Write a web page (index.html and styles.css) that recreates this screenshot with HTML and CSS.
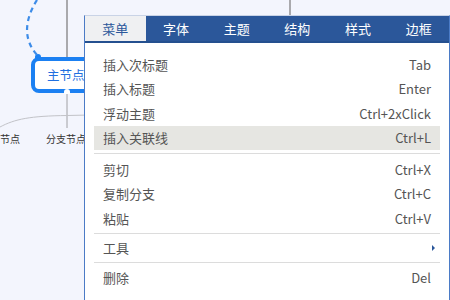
FILE: index.html
```html
<!DOCTYPE html>
<html lang="zh">
<head>
<meta charset="utf-8">
<link rel="stylesheet" href="styles.css">
</head>
<body>
<div class="canvas">
  <svg class="links" width="450" height="300" viewBox="0 0 450 300">
    <path d="M67 0 V57" class="trunk"/>
    <path d="M67 93 V128" class="branch"/>
    <path d="M290 0 V16" class="trunk"/>
    <path d="M0 127 C15 119 30 116 67 115.5 L90 115" class="curve"/>
    <path d="M37 0 C27 16 20 38 39 57" class="dash"/>
  </svg>
  <div class="node main">主节点</div>
  <div class="nub top"></div>
  <div class="nub bottom"></div>
  <div class="label l1">节点</div>
  <div class="label l2">分支节点</div>

  <div class="menu">
    <div class="tabs">
      <div class="tab active">菜单</div>
      <div class="tab">字体</div>
      <div class="tab">主题</div>
      <div class="tab">结构</div>
      <div class="tab">样式</div>
      <div class="tab">边框</div>
    </div>
    <div class="list">
      <div class="item"><span>插入次标题</span><span>Tab</span></div>
      <div class="item"><span>插入标题</span><span>Enter</span></div>
      <div class="item"><span>浮动主题</span><span>Ctrl+2xClick</span></div>
      <div class="item hover"><span>插入关联线</span><span>Ctrl+L</span></div>
      <div class="sep"></div>
      <div class="item"><span>剪切</span><span>Ctrl+X</span></div>
      <div class="item"><span>复制分支</span><span>Ctrl+C</span></div>
      <div class="item"><span>粘贴</span><span>Ctrl+V</span></div>
      <div class="sep tight"></div>
      <div class="item"><span>工具</span><span class="arrow"></span></div>
      <div class="sep tight"></div>
      <div class="item"><span>删除</span><span>Del</span></div>
    </div>
  </div>
</div>
</body>
</html>
```

FILE: styles.css
```css
* { box-sizing: border-box; }
html, body {
  margin: 0;
  padding: 0;
  width: 450px;
  height: 300px;
  overflow: hidden;
  background: #f3f5fd;
  font-family: "Noto Sans CJK SC", "Noto Sans", sans-serif;
}
.canvas {
  position: relative;
  width: 450px;
  height: 300px;
  overflow: hidden;
}
.links {
  position: absolute;
  left: 0;
  top: 0;
}
.trunk { stroke: #a9a9ad; stroke-width: 2; fill: none; }
.branch { stroke: #a0a0a4; stroke-width: 1; fill: none; }
.curve { stroke: #c2c3c8; stroke-width: 1; fill: none; }
.dash { stroke: #3d8ce8; stroke-width: 2.2; fill: none; stroke-dasharray: 5 4; }

.node {
  position: absolute;
  left: 31px;
  top: 57px;
  width: 80px;
  height: 36px;
  border: 4px solid #1b80f2;
  border-radius: 8px;
  background: #fff;
  color: #1f6fe0;
  font-size: 12.5px;
  line-height: 28px;
  padding-left: 12px;
  white-space: nowrap;
}
.nub {
  position: absolute;
  width: 6px;
  height: 5px;
  background: #1b80f2;
  border-radius: 3px 3px 0 0;
}
.nub.top { left: 35px; top: 54px; }
.nub.bottom {
  left: 64px;
  top: 89px;
  background: #fff;
  border-radius: 3px 3px 0 0;
}
.label {
  position: absolute;
  top: 132px;
  font-size: 10px;
  line-height: 14px;
  color: #333;
  white-space: nowrap;
}
.l1 { left: 0; }
.l2 { left: 46px; }

.menu {
  position: absolute;
  left: 84px;
  top: 15px;
  width: 366px;
  height: 300px;
  background: #fff;
  border: 1px solid #4b7bc6;
  border-top-color: #c9d3e6;
}
.tabs {
  display: grid;
  grid-template-columns: repeat(6, 1fr);
  height: 27px;
  background: #2b579a;
  border-bottom: 2px solid #24508f;
}
.tab {
  color: #fff;
  font-size: 13px;
  line-height: 25px;
  text-align: center;
}
.tab.active {
  background: #eff0f2;
  color: #2b579a;
}
.list {
  padding: 9px 9px 0;
}
.item {
  display: flex;
  justify-content: space-between;
  align-items: center;
  height: 24.5px;
  padding: 0 9px;
  font-size: 13px;
  color: #555;
}
.item.hover { background: #e6e6e2; }
.sep {
  height: 1px;
  margin: 3px 0 3px;
  background: #dcdcdc;
}
.sep.tight {
  margin: 2px 0 2px;
}
.arrow {
  width: 0;
  height: 0;
  border-left: 3px solid #2b579a;
  border-top: 3px solid transparent;
  border-bottom: 3px solid transparent;
  margin-right: -4px;
}
```
